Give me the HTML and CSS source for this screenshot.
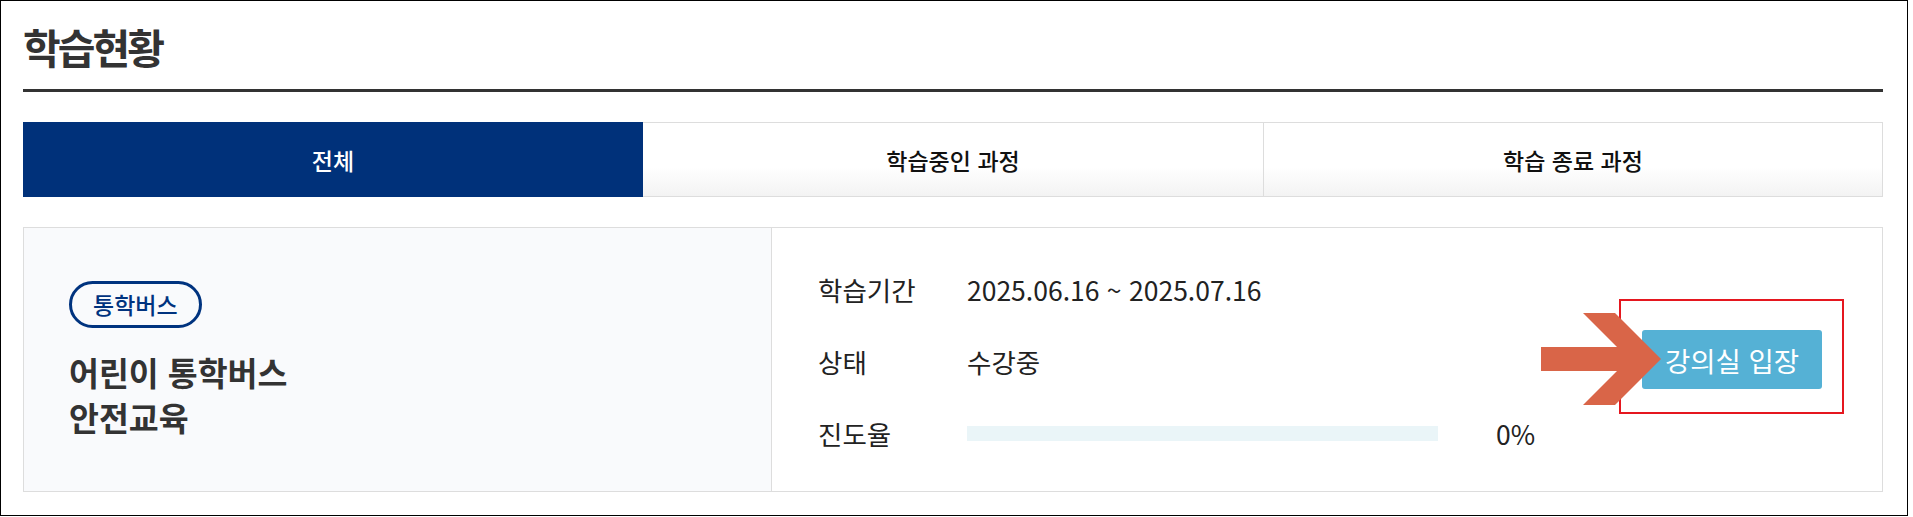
FILE: index.html
```html
<!DOCTYPE html>
<html lang="ko">
<head>
<meta charset="utf-8">
<title>학습현황</title>
<link rel="stylesheet" href="styles.css">
</head>
<body>
<div class="frame">
  <header class="page-head">
    <h2 class="page-title">학습현황</h2>
  </header>
  <ul class="tabs">
    <li class="tab active">전체</li>
    <li class="tab">학습중인 과정</li>
    <li class="tab">학습 종료 과정</li>
  </ul>
  <div class="course-card">
    <div class="course-info">
      <span class="badge">통학버스</span>
      <h3 class="course-title">어린이 통학버스<br>안전교육</h3>
    </div>
    <div class="course-detail">
      <dl class="meta">
        <div class="meta-row"><dt>학습기간</dt><dd>2025.06.16 ~ 2025.07.16</dd></div>
        <div class="meta-row"><dt>상태</dt><dd>수강중</dd></div>
        <div class="meta-row"><dt>진도율</dt><dd class="progress"><span class="bar"><span class="fill" style="width:0%"></span></span><span class="pct">0%</span></dd></div>
      </dl>
      <a class="enter-btn" href="#">강의실 입장</a>
    </div>
  </div>
  <div class="highlight-box"></div>
  <svg class="pointer-arrow" width="121" height="92" viewBox="0 0 121 92" aria-hidden="true">
    <polygon points="0,34 76,34 42,0 74,0 120,46 74,92 42,92 76,58 0,58" fill="#d96548"/>
  </svg>
</div>
</body>
</html>
```
FILE: styles.css
```css
* { box-sizing: border-box; }
html, body { margin: 0; padding: 0; background: #fff; }
body { font-family: "Noto Sans CJK KR", "Noto Sans", sans-serif; color: #222; }

.frame {
  position: relative;
  width: 1908px;
  height: 516px;
  border: 1px solid #000;
  padding: 25px 24px 0 22px;
}

.page-head {
  padding-bottom: 22px;
  border-bottom: 3px solid #333;
}
.page-title {
  margin: 0;
  font-size: 41px;
  line-height: 41px;
  font-weight: 700;
  letter-spacing: -3px;
  color: #333;
}

.tabs {
  list-style: none;
  margin: 30px 0 0;
  padding: 0;
  display: grid;
  grid-template-columns: repeat(3, 1fr);
  height: 75px;
}
.tab {
  display: flex;
  align-items: center;
  justify-content: center;
  font-size: 23px;
  font-weight: 500;
  color: #111;
  border-top: 1px solid #ddd;
  border-bottom: 1px solid #ddd;
  background: linear-gradient(to bottom, #fff 60%, #f3f3f3 100%);
}
.tab + .tab + .tab { border-left: 1px solid #ddd; border-right: 1px solid #ddd; }
.tab.active {
  background: #00317a;
  color: #fff;
  border-color: #00317a;
}

.course-card {
  margin-top: 30px;
  height: 265px;
  border: 1px solid #ddd;
  display: flex;
}
.course-info {
  width: 748px;
  background: #f9fafc;
  border-right: 1px solid #ddd;
  padding-left: 45px;
  display: flex;
  flex-direction: column;
  justify-content: center;
  align-items: flex-start;
}
.badge {
  display: inline-flex;
  align-items: center;
  height: 47px;
  padding: 0 21px;
  border: 3px solid #00337f;
  border-radius: 24px;
  font-size: 23px;
  font-weight: 500;
  color: #00337f;
}
.course-title {
  margin: 21px 0 0;
  font-size: 32.5px;
  line-height: 45px;
  font-weight: 700;
  color: #333;
}

.course-detail {
  flex: 1;
  display: flex;
  align-items: center;
  padding: 0 60px 0 46px;
  background: #fff;
}
.meta { flex: 1; margin: 0; padding-top: 3px; }
.meta-row {
  display: flex;
  align-items: center;
  height: 72px;
  font-size: 26.5px;
}
.meta-row dt { width: 149px; color: #222; }
.meta-row dd { margin: 0; color: #222; }
.progress { display: flex; align-items: center; }
.bar {
  display: block;
  width: 471px;
  height: 15px;
  background: #eaf5f8;
}
.fill { display: block; height: 100%; background: #55b1d5; }
.pct { margin-left: 58px; }

.enter-btn {
  display: flex;
  align-items: center;
  justify-content: center;
  width: 180px;
  height: 59px;
  background: #55b1d5;
  border-radius: 3px;
  color: #fff;
  font-size: 27.5px;
  text-decoration: none;
}

.highlight-box {
  position: absolute;
  left: 1618px;
  top: 298px;
  width: 225px;
  height: 115px;
  border: 2px solid #e5171f;
}
.pointer-arrow {
  position: absolute;
  left: 1540px;
  top: 312px;
}
```
